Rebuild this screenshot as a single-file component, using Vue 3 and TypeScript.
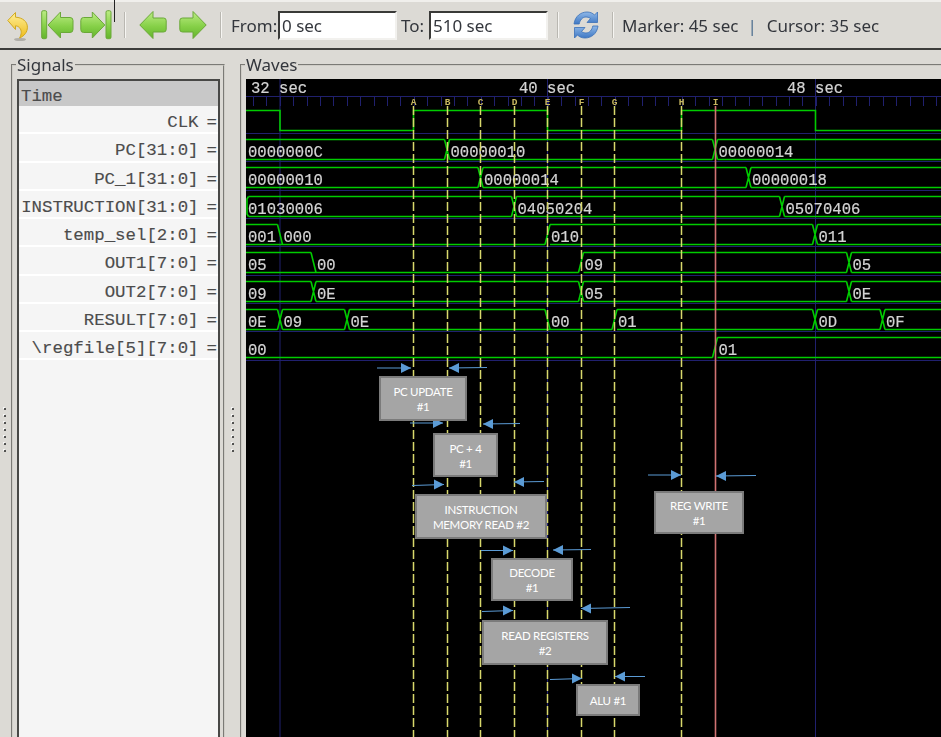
<script setup lang="ts">
interface Seg { x: number; text?: string; zero?: boolean }
interface Row { top: number; segs: Seg[] }

const END = 945
const START = 246

const rows: Row[] = [
  { top: 139, segs: [{ x: 240, text: '0000000C' }, { x: 447, text: '00000010' }, { x: 715, text: '00000014' }] },
  { top: 167, segs: [{ x: 240, text: '00000010' }, { x: 480.5, text: '00000014' }, { x: 748.5, text: '00000018' }] },
  { top: 196, segs: [{ x: 246, text: '01030006' }, { x: 514, text: '04050204' }, { x: 782, text: '05070406' }] },
  { top: 224, segs: [{ x: 240, text: '001' }, { x: 280, text: '000', zero: true }, { x: 547.5, text: '010' }, { x: 815, text: '011' }] },
  { top: 252, segs: [{ x: 240, text: '05' }, { x: 313.5, text: '00', zero: true }, { x: 581, text: '09' }, { x: 849, text: '05' }] },
  { top: 281, segs: [{ x: 240, text: '09' }, { x: 313.5, text: '0E' }, { x: 581, text: '05' }, { x: 849, text: '0E' }] },
  { top: 309, segs: [{ x: 240, text: '0E' }, { x: 280, text: '09' }, { x: 347, text: '0E' }, { x: 547.5, text: '00', zero: true }, { x: 614.5, text: '01' }, { x: 815, text: '0D' }, { x: 882.5, text: '0F' }] },
  { top: 337, segs: [{ x: 240, text: '00', zero: true }, { x: 715, text: '01' }] },
]

const H = 20

function busPath(r: Row): string {
  const t = r.top + 0.5
  const b = t + H
  let d = ''
  r.segs.forEach((s, i) => {
    const next = r.segs[i + 1]
    const x1 = s.x + 2.5
    const x2 = next ? next.x - 2.5 : END
    if (!s.zero) d += `M${x1} ${t}H${x2}`
    d += `M${x1} ${b}H${x2}`
    if (next) {
      d += `M${x2} ${b}L${next.x + 2.5} ${next.zero ? b : t}`
      if (!s.zero) d += `M${x2} ${t}L${next.x + 2.5} ${b}`
    }
  })
  return d
}

function labels(r: Row) {
  return r.segs.map((s) => ({
    x: s.x < 250 ? 248 : s.x + 3.5,
    y: r.top + H - 2.5,
    text: s.text,
  }))
}

const waveLabels = rows.flatMap(labels)
const buses = rows.map(busPath)
const startCap = 'M248.5 196.5L247 199V214L248.5 216.5'

const clk = 'M240 110.5H280V130.5H413.5V110.5H547.5V130.5H681.5V110.5H815.5V130.5H945'

const separators = [133, 161, 190, 218, 246, 275, 303, 331, 360]
const majors = [280, 547.5, 815.5]
const ticks: number[] = []
for (let x = 253; x < 945; x += 13.4) ticks.push(x)

const markers = [
  { x: 413.5, n: 'A' },
  { x: 447.5, n: 'B' },
  { x: 480.5, n: 'C' },
  { x: 514.5, n: 'D' },
  { x: 547.5, n: 'E' },
  { x: 581.5, n: 'F' },
  { x: 614.5, n: 'G' },
  { x: 681.5, n: 'H' },
]

const scale = [
  { x: 251, t: '32 sec' },
  { x: 519, t: '40 sec' },
  { x: 787, t: '48 sec' },
]

const arrows = [
  [377, 368, 411, 368],
  [487, 367.5, 449, 368],
  [410, 423, 443, 423],
  [520, 423.5, 483, 424],
  [412, 485.5, 444, 484.5],
  [544, 481.5, 514, 482],
  [481, 550.5, 513, 550.5],
  [591, 549.5, 553, 550],
  [648, 475, 681, 475],
  [756, 475.5, 716, 476],
  [482, 611.5, 513, 610.5],
  [630, 607.5, 581, 608.5],
  [550, 679.5, 582, 678.5],
  [645, 676.5, 615, 676.5],
]

function head(a: number[]): string {
  const [x1, , x2, y2] = a
  const dir = x2 > x1 ? -1 : 1
  return `${x2},${y2} ${x2 + dir * 10},${y2 - 5} ${x2 + dir * 10},${y2 + 5}`
}

const boxes = [
  { x: 379, y: 376, w: 88, h: 45, lines: ['PC UPDATE', '#1'] },
  { x: 433, y: 433, w: 65, h: 44, lines: ['PC + 4', '#1'] },
  { x: 415, y: 494, w: 132, h: 45, lines: ['INSTRUCTION', 'MEMORY READ #2'] },
  { x: 654, y: 491, w: 90, h: 43, lines: ['REG WRITE', '#1'] },
  { x: 491, y: 558, w: 82, h: 43, lines: ['DECODE', '#1'] },
  { x: 482, y: 620, w: 126, h: 45, lines: ['READ REGISTERS', '#2'] },
  { x: 576, y: 684, w: 64, h: 32, lines: ['ALU #1'] },
]

const signals = [
  'CLK',
  'PC[31:0]',
  'PC_1[31:0]',
  'INSTRUCTION[31:0]',
  'temp_sel[2:0]',
  'OUT1[7:0]',
  'OUT2[7:0]',
  'RESULT[7:0]',
  '\\regfile[5][7:0]',
]

const dots = [1, 2, 3, 4, 5, 6, 7]

function boxStyle(b: { x: number; y: number; w: number; h: number }) {
  return {
    left: `${b.x - START}px`,
    top: `${b.y - 79}px`,
    width: `${b.w}px`,
    height: `${b.h}px`,
  }
}
</script>

<template>
  <div class="app">
    <header class="toolbar">
      <span class="stray"></span>
      <svg class="icon undo" width="22" height="32" viewBox="0 0 22 32">
        <defs>
          <linearGradient id="gy" x1="0" y1="0" x2="0" y2="1">
            <stop offset="0" stop-color="#fff09a" />
            <stop offset="1" stop-color="#eebc1c" />
          </linearGradient>
          <linearGradient id="gg" x1="0" y1="0" x2="0" y2="1">
            <stop offset="0" stop-color="#bcec84" />
            <stop offset="0.55" stop-color="#86d048" />
            <stop offset="1" stop-color="#64b42c" />
          </linearGradient>
          <linearGradient id="gb" x1="0" y1="0" x2="0" y2="1">
            <stop offset="0" stop-color="#8fb8e8" />
            <stop offset="1" stop-color="#3f78c4" />
          </linearGradient>
        </defs>
        <ellipse cx="13" cy="28.5" rx="6" ry="1.6" fill="#b0aea8" />
        <path d="M0.8 9.5L8.5 1.5V6.2C15.5 6.5 20.4 10.5 20.4 16.2C20.4 21 17.4 25 12.6 27C14.5 23.2 15 19.5 12.6 16.8C11.5 15.6 10 14.9 8.5 14.8V18.5Z" fill="url(#gy)" stroke="#d0a820" stroke-linejoin="round" />
      </svg>
      <svg class="icon first" width="33" height="30" viewBox="0 0 33 30">
        <rect x="0.7" y="0.7" width="5" height="28" rx="1.5" fill="url(#gg)" stroke="#6aa838" />
        <path d="M7 15L19.5 2V7.5H29Q32 7.5 32 10.5V19.5Q32 22.5 29 22.5H19.5V28Z" fill="url(#gg)" stroke="#6aa838" stroke-linejoin="round" />
      </svg>
      <svg class="icon last" width="32" height="30" viewBox="0 0 32 30">
        <rect x="26" y="0.7" width="5" height="28" rx="1.5" fill="url(#gg)" stroke="#6aa838" />
        <path d="M24.8 15L12.3 2V7.5H3.5Q0.8 7.5 0.8 10.5V19.5Q0.8 22.5 3.5 22.5H12.3V28Z" fill="url(#gg)" stroke="#6aa838" stroke-linejoin="round" />
      </svg>
      <span class="sep s1"></span>
      <svg class="icon prev" width="28" height="30" viewBox="0 0 28 30">
        <path d="M0.8 15L14 1.5V8H24.5Q27.2 8 27.2 10.5V19.5Q27.2 22 24.5 22H14V28.5Z" fill="url(#gg)" stroke="#6aa838" stroke-linejoin="round" />
      </svg>
      <svg class="icon next" width="28" height="30" viewBox="0 0 28 30">
        <path d="M27.2 15L14 1.5V8H3.5Q0.8 8 0.8 10.5V19.5Q0.8 22 3.5 22H14V28.5Z" fill="url(#gg)" stroke="#6aa838" stroke-linejoin="round" />
      </svg>
      <span class="sep s2"></span>
      <label class="tlabel from">From:</label>
      <input class="field" value="0 sec" />
      <label class="tlabel to">To:</label>
      <input class="field" value="510 sec" />
      <span class="sep s3"></span>
      <svg class="icon refresh" width="26" height="30" viewBox="0 0 26 30">
        <g fill="url(#gb)" stroke="#3a70b8" stroke-width="0.8" stroke-linejoin="round">
          <path d="M1 14C2 6 8 2 14 2C17 2 19.5 3 21.5 5L24.5 2V12.5H14L17.5 8.5C16 7.5 14.5 7 13 7C9.5 7 7 10 6.2 14Z" />
          <path d="M25 16C24 24 18 28 12 28C9 28 6.5 27 4.5 25L1.5 28V17.5H12L8.5 21.5C10 22.5 11.5 23 13 23C16.5 23 19 20 19.8 16Z" />
        </g>
      </svg>
      <span class="sep s4"></span>
      <span class="status marker">Marker: 45 sec</span>
      <span class="status bar">|</span>
      <span class="status">Cursor: 35 sec</span>
    </header>

    <main class="panels">
      <div class="handle edge">
        <i v-for="d in dots" :key="d" class="dot"></i>
      </div>
      <fieldset class="group signals">
        <legend>Signals</legend>
        <div class="list">
          <div class="time">Time</div>
          <div class="names">
            <div v-for="s in signals" :key="s" class="name">{{ s }}<span class="eq">=</span></div>
          </div>
        </div>
      </fieldset>
      <div class="handle mid">
        <i v-for="d in dots" :key="d" class="dot"></i>
      </div>
      <fieldset class="group waves">
        <legend>Waves</legend>
        <div class="canvas">
          <svg class="plot" width="695" height="658" viewBox="246 79 695 658">
            <g stroke="#20206e" fill="none">
              <path d="M246 96.5H941" />
              <path v-for="y in separators" :key="y" :d="`M246 ${y + 0.5}H941`" />
              <path v-for="x in majors" :key="x" :d="`M${x} 79V737`" />
              <path v-for="t in ticks" :key="t" :d="`M${Math.round(t) + 0.5} 97V106`" />
            </g>
            <g class="scale">
              <text v-for="s in scale" :key="s.t" :x="s.x" y="93">{{ s.t }}</text>
            </g>
            <g fill="none" stroke="#00cc00" stroke-width="1.6">
              <path :d="clk" />
              <path v-for="(d, i) in buses" :key="i" :d="d" />
              <path :d="startCap" />
            </g>
            <g class="vals">
              <text v-for="(l, i) in waveLabels" :key="i" :x="l.x" :y="l.y">{{ l.text }}</text>
            </g>
            <g stroke="#d8d86c" stroke-width="1.5" stroke-dasharray="9 3" fill="none">
              <path v-for="m in markers" :key="m.n" :d="`M${m.x} 106V737`" />
            </g>
            <path d="M715.5 106V737" stroke="#d07272" stroke-width="1.6" fill="none" />
            <g class="letters">
              <text v-for="m in markers" :key="m.n" :x="m.x" y="105">{{ m.n }}</text>
              <text x="715.5" y="105">I</text>
            </g>
          </svg>
          <svg class="overlay" width="695" height="658" viewBox="246 79 695 658">
            <g stroke="#5b9bd5" fill="#5b9bd5">
              <g v-for="(a, i) in arrows" :key="i">
                <line :x1="a[0]" :y1="a[1]" :x2="a[2]" :y2="a[3]" />
                <polygon :points="head(a)" stroke="none" />
              </g>
            </g>
          </svg>
          <div v-for="b in boxes" :key="b.lines[0]" class="box" :style="boxStyle(b)">
            <span v-for="l in b.lines" :key="l">{{ l }}</span>
          </div>
        </div>
      </fieldset>
    </main>
  </div>
</template>

<style scoped>
.app {
  position: relative;
  width: 941px;
  height: 737px;
  overflow: hidden;
  background: #dcdad5;
  font-family: "Noto Sans", sans-serif;
}
.toolbar {
  position: relative;
  box-sizing: border-box;
  height: 50px;
  display: flex;
  align-items: center;
  padding-left: 7px;
  border-top: 2px solid #f0efec;
  border-bottom: 2px solid #3c3c3a;
  color: #33363c;
}
.toolbar > *:not(.stray) { filter: blur(0.35px); }
.stray {
  position: absolute;
  left: 114px;
  top: -2px;
  width: 1px;
  height: 22px;
  background: #222;
}
.icon { flex: none; display: block; }
.undo { margin-top: 3px; }
.first { margin-left: 12px; }
.last { margin-left: 6px; }
.prev { margin-left: 13px; }
.next { margin-left: 12px; }
.refresh { margin-left: 14px; }
.sep {
  flex: none;
  width: 1px;
  height: 26px;
  background: #b9b7b1;
  border-right: 1px solid #f6f5f2;
}
.s1 { margin-left: 12px; }
.s2 { margin-left: 13px; }
.s3 { margin-left: 9px; }
.s4 { margin-left: 13px; }
.tlabel { flex: none; font-size: 17px; }
.from { margin-left: 9px; width: 47px; }
.to { margin-left: 4px; width: 28px; }
.field {
  flex: none;
  box-sizing: border-box;
  width: 119px;
  height: 29px;
  padding: 0 3px 0 2px;
  background: #fff;
  border: 2px solid;
  border-color: #3a3a38 #f2f1ee #f2f1ee #3a3a38;
  outline: none;
  font: 17px "Noto Sans", sans-serif;
  color: #33363c;
}
.status { font-size: 17px; white-space: pre; }
.marker { margin-left: 8px; }
.bar { margin: 0 10px 0 9px; color: #4f6f90; }
.panels {
  display: flex;
  align-items: flex-start;
  padding-top: 4px;
}
.handle {
  flex: none;
  display: flex;
  flex-direction: column;
  align-items: center;
  gap: 5px;
  padding-top: 354px;
}
.edge { width: 9px; margin-right: 2px; }
.mid { width: 15px; }
.dot {
  width: 2px;
  height: 2px;
  border-radius: 50%;
  background: #222;
  box-shadow: -1px -1px 0 #fff;
}
.group {
  box-sizing: border-box;
  min-width: 0;
  margin: 0;
  height: 720px;
  border: 2px groove #cfcdc7;
  color: #33363c;
}
.group legend {
  padding: 0 1px;
  margin-left: -1px;
  font-size: 17px;
  line-height: 22px;
  filter: blur(0.35px);
}
.signals {
  flex: none;
  width: 214px;
  padding: 3px 3px 0 4px;
}
.waves {
  flex: none;
  width: 720px;
  padding: 3px 0 0 4px;
}
.list {
  box-sizing: border-box;
  width: 203px;
  height: 670px;
  border: 2px solid #484846;
  background: #f5f5f5;
  font-family: "Liberation Mono", monospace;
  font-size: 17.4px;
  color: #4c4c4c;
}
.time {
  box-sizing: border-box;
  height: 25px;
  line-height: 31px;
  padding-left: 2px;
  background: #c8c8c8;
  -webkit-text-stroke: 0.15px #4c4c4c;
}
.names {
  display: grid;
  grid-auto-rows: 28.25px;
}
.name {
  box-sizing: border-box;
  display: flex;
  justify-content: flex-end;
  padding: 4px 1px 0 0;
  line-height: 25px;
  border-bottom: 2px solid #ffffff;
  white-space: pre;
  -webkit-text-stroke: 0.15px #4c4c4c;
}
.eq { margin-left: 8px; }
.canvas {
  position: relative;
  width: 695px;
  height: 658px;
  background: #000;
  overflow: hidden;
}
.plot { display: block; filter: blur(0.3px); }
.overlay { position: absolute; left: 0; top: 0; }
.scale text,
.vals text {
  font-family: "Liberation Mono", monospace;
  font-size: 15.6px;
  fill: #d4d4d4;
  stroke: #d4d4d4;
  stroke-width: 0.2px;
}
.letters text {
  font-family: "Liberation Mono", monospace;
  font-size: 9.5px;
  font-weight: 700;
  fill: #c8b860;
  text-anchor: middle;
}
.box {
  position: absolute;
  box-sizing: border-box;
  display: flex;
  flex-direction: column;
  align-items: center;
  justify-content: center;
  padding-top: 1px;
  background: #a5a5a5;
  border: 2.5px solid #7b7b7b;
  color: #fff;
  font-family: Lato, sans-serif;
  font-size: 11.5px;
  letter-spacing: -0.3px;
  line-height: 15px;
}
</style>
